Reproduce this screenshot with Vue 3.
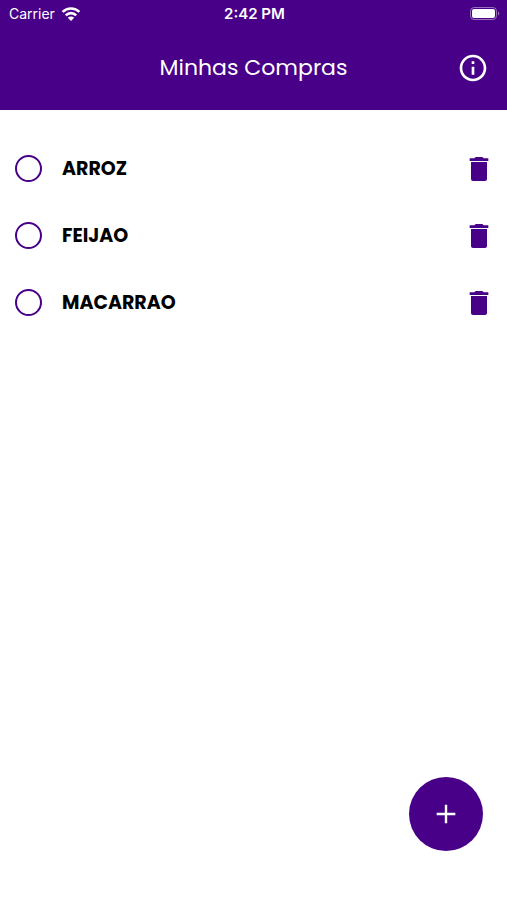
<script setup>
import { ref } from 'vue'

const items = ref([
  { id: 1, name: 'ARROZ', done: false },
  { id: 2, name: 'FEIJAO', done: false },
  { id: 3, name: 'MACARRAO', done: false },
])

function removeItem(id) {
  items.value = items.value.filter((item) => item.id !== id)
}
</script>

<template>
  <div class="screen">
    <header class="header">
      <div class="status">
        <div class="carrier">
          <span>Carrier</span>
          <svg class="wifi" viewBox="0 0 20 16" aria-hidden="true">
            <path d="M1.600 5.900a12 12 0 0 1 16.800 0" />
            <path d="M4.800 9.300a7.400 7.400 0 0 1 10.400 0" />
            <path class="wifi-dot" d="M10 15 6.800 11.700a4.600 4.600 0 0 1 6.400 0z" />
          </svg>
        </div>
        <span class="clock">2:42 PM</span>
        <svg class="battery" viewBox="0 0 30 14" aria-hidden="true">
          <rect class="battery-case" x="0.5" y="0.5" width="26" height="12" rx="3.6" />
          <rect class="battery-fill" x="2" y="2" width="23" height="9" rx="2" />
          <path class="battery-tip" d="M28 4.500a2.200 2.200 0 0 1 0 4z" />
        </svg>
      </div>
      <div class="bar">
        <h1 class="title">Minhas Compras</h1>
        <button class="icon-button info" type="button" aria-label="Informações">
          <svg class="icon" viewBox="0 0 24 24" aria-hidden="true">
            <path d="M11 7h2v2h-2zm0 4h2v6h-2zm1-9C6.480 2 2 6.480 2 12s4.480 10 10 10 10-4.480 10-10S17.520 2 12 2zm0 18c-4.410 0-8-3.590-8-8s3.590-8 8-8 8 3.590 8 8-3.590 8-8 8z" />
          </svg>
        </button>
      </div>
    </header>

    <main class="content">
      <ul class="list">
        <li v-for="item in items" :key="item.id" class="row">
          <label class="item">
            <input v-model="item.done" class="check" type="checkbox" />
            <span>{{ item.name }}</span>
          </label>
          <button
            class="icon-button"
            type="button"
            :aria-label="'Excluir ' + item.name"
            @click="removeItem(item.id)"
          >
            <svg class="icon" viewBox="0 0 24 24" aria-hidden="true">
              <path d="M6 19.500c0 .8.7 1.500 1.500 1.500h9c.8 0 1.500-.7 1.500-1.500V6.800H6zM19 4h-3.500l-1-1h-5l-1 1H5v2h14V4z" />
            </svg>
          </button>
        </li>
      </ul>
    </main>

    <button class="fab" type="button" aria-label="Adicionar item">
      <svg class="icon" viewBox="0 0 24 24" aria-hidden="true">
        <path d="M19 12.900h-6.100v6.100h-1.800v-6.100H5v-1.800h6.100V5h1.800v6.100H19z" />
      </svg>
    </button>
  </div>
</template>

<style>
body {
  margin: 0;
  background: #fff;
}
</style>

<style scoped>
.screen {
  min-height: 100vh;
  color: #000;
  font-family: Poppins, Inter, "Liberation Sans", sans-serif;
}

.header {
  background: #480088;
  color: #fff;
}

.status {
  display: grid;
  grid-template-columns: 1fr auto 1fr;
  align-items: center;
  height: 27px;
  padding: 0 7px 0 9px;
  font-family: Inter, "Liberation Sans", sans-serif;
  font-size: 14px;
}

.carrier {
  display: flex;
  align-items: center;
  gap: 6px;
}

.clock {
  font-size: 15px;
  font-weight: 600;
}

.wifi {
  width: 20px;
  height: 16px;
  fill: none;
  stroke: #fff;
  stroke-width: 2.6;
}

.wifi-dot {
  fill: #fff;
  stroke: none;
}

.battery {
  justify-self: end;
  width: 30px;
  height: 14px;
}

.battery-case {
  fill: none;
  stroke: #9a70be;
}

.battery-fill {
  fill: #fff;
}

.battery-tip {
  fill: #9a70be;
}

.bar {
  display: grid;
  grid-template-columns: 1fr auto 1fr;
  align-items: center;
  padding: 25px 18px 26px;
}

.title {
  grid-column: 2;
  margin: 0;
  font-size: 22px;
  font-weight: 400;
  line-height: 32px;
}

.info {
  justify-self: end;
}

.icon-button {
  display: flex;
  padding: 0;
  border: 0;
  background: none;
  color: inherit;
  cursor: pointer;
}

.icon {
  display: block;
  width: 32px;
  height: 32px;
  fill: currentColor;
}

.content {
  padding: 25px 12px 0 15px;
}

.list {
  margin: 0;
  padding: 0;
  list-style: none;
}

.row {
  display: flex;
  align-items: center;
  height: 67px;
  color: #480088;
}

.item {
  display: flex;
  flex: 1;
  align-items: center;
  gap: 20px;
  color: #000;
  font-size: 19px;
  font-weight: 700;
  line-height: 29px;
}

.check {
  width: 27px;
  height: 27px;
  margin: 0;
  border: 2px solid #480088;
  border-radius: 50%;
  appearance: none;
}

.check:checked {
  background: #480088;
  box-shadow: inset 0 0 0 3px #fff;
}

.fab {
  position: fixed;
  right: 24px;
  bottom: 49px;
  display: flex;
  align-items: center;
  justify-content: center;
  width: 74px;
  height: 74px;
  padding: 0;
  border: 0;
  border-radius: 50%;
  background: #480088;
  color: #fff;
  cursor: pointer;
}
</style>
